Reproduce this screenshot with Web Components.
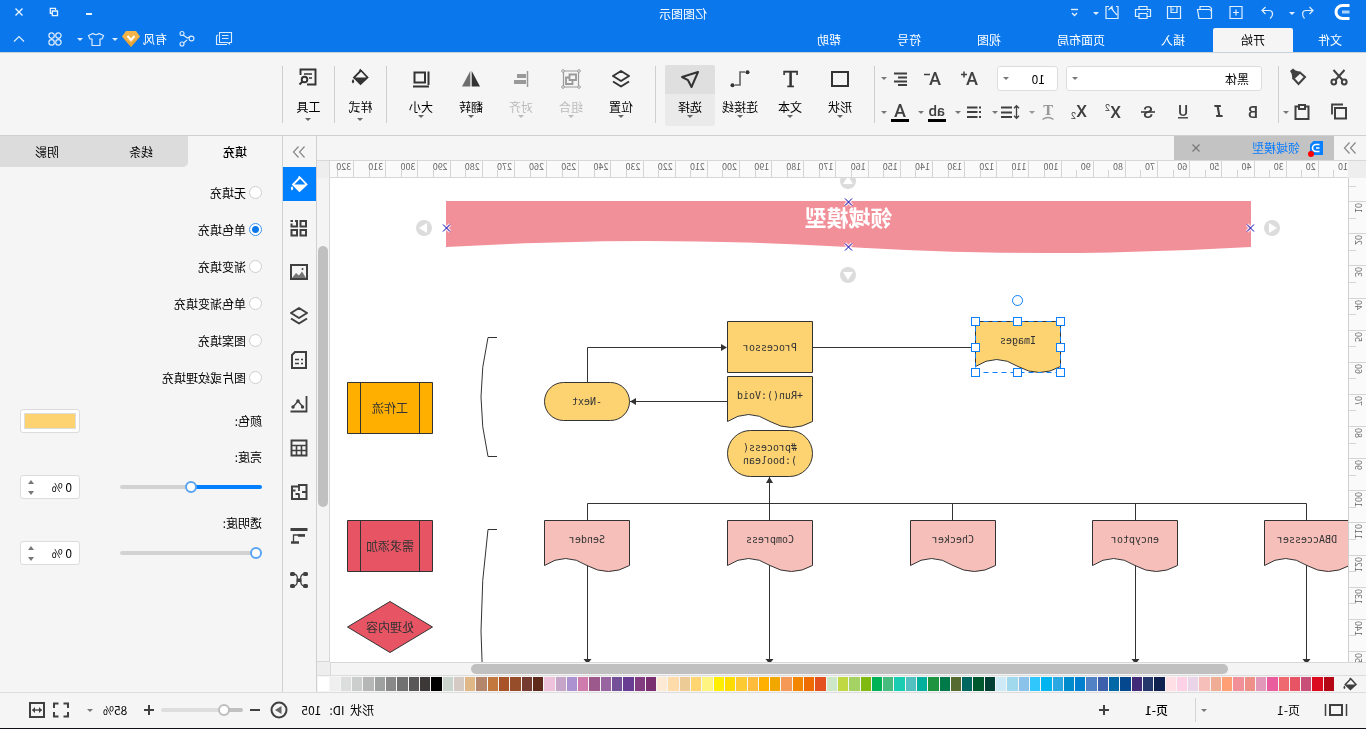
<!DOCTYPE html>
<html lang="zh-CN">
<head>
<meta charset="utf-8">
<title>亿图图示</title>
<style>
  html, body { margin: 0; height: 100%; background: #f4f4f4; overflow: hidden; }
  body { font: 12px/16px "Noto Sans CJK SC", "Liberation Sans", sans-serif; color: #000; }
</style>
</head>
<body>
<edraw-app></edraw-app>
<script>
const define = (name, render) => customElements.define(name, class extends HTMLElement {
  constructor() { super(); this.attachShadow({ mode: 'open' }); }
  connectedCallback() { this.shadowRoot.innerHTML = render(this); }
});
const RESET = `*,:host{box-sizing:border-box} button{font:inherit;color:inherit;background:none;border:0;padding:0;margin:0}
 input,select{font:inherit;color:inherit;margin:0} a{color:inherit;text-decoration:none}`;

/* ---------- icons: 24 x 24 drawings ---------- */
const S = (w, d, extra = '') => `<path d="${d}" fill="none" stroke="currentColor" stroke-width="${w}" ${extra}/>`;
const T = (x, y, size, t, family = 'Roboto', more = '') => `<text x="${x}" y="${y}" font-size="${size}" font-family="${family}, sans-serif" fill="currentColor" ${more}>${t}</text>`;
const BUCKET = (w) => S(w, 'M11 4.5 L12.5 6 M11 5.5 L4.5 12.5 L11.5 19 L18 12.5 L11.5 6') +
  `<path d="M4.5 12.5 H18 L11.5 19 Z" fill="currentColor"/><path d="M19 14 q2.4 3 0 4.4 q-2.4 -1.4 0 -4.4" fill="currentColor"/>`;
const ICONS = {
  logo: S(3, 'M4.5 5.5 H11.5 A6.5 6.5 0 0 1 11.5 18.5 H4.5') + `<path d="M4.5 12 H12" stroke="#a9d2fa" stroke-width="3"/>`,
  undo: S(1.2, 'M10.5 7 L7 10.5 L10.5 14 M7 10.5 H14 C18 10.5 18.5 15 15.5 18.5'),
  redo: S(1.2, 'M13.5 7 L17 10.5 L13.5 14 M17 10.5 H10 C6 10.5 5 15 9 18.5'),
  newbox: S(1.2, 'M6 6.5 H18 V18.5 H6 Z M12 9.5 V15.5 M9 12.5 H15'),
  open: S(1.2, 'M5.5 18.5 V8.5 L7.5 6.5 H17 V9 M5.5 18.5 H18 L19.5 9.5 H8 Q6.5 9.5 6 11'),
  save: S(1.2, 'M5.5 6.5 H18.5 V18.5 H5.5 Z M9 6.5 V12.5 H15 V6.5 M13 8.5 V10.5'),
  print: S(1.2, 'M8 9.5 V6.5 H16 V9.5 M8 16.5 H4.5 V9.5 H19.5 V16.5 H16 M8 13.5 H16 V18.5 H8 Z M6.5 11.5 H8'),
  share: S(1.2, 'M9 6.5 H6 V18.5 H18 V6.5 H16 M8.5 10 L12 6.5 L12.5 10.5 M12 6.5 Q11 9 17 15', 'transform="matrix(-1 0 0 1 24 0)"'),
  more: S(1.4, 'M8 9.5 H15') + S(1.3, 'M9 13 L11.5 15.5 L14 13'),
  min: S(2, 'M9 14 H15'),
  restore: S(1.3, 'M10.5 10 V8.3 H15.7 V13.3 H14') + S(1.3, 'M8.5 11 H13.7 V15.7 H8.5 Z'),
  close: S(1.4, 'M8.5 8.5 L15.5 15.5 M15.5 8.5 L8.5 15.5'),
  comment: S(1.1, 'M4.5 6.5 H16.5 V16.5 H8.5 L6.5 18 V16.5 H4.5 Z M7.5 9.5 H14 M7.5 12.5 H14 M18 9 L19.5 10 V18.5 H9', 'transform="matrix(1 0 0 1 0 -1)"'),
  nodes: S(1.1, 'M8 9 L11.5 11 L16 8 M12 13 L15.5 16') + `<g fill="none" stroke="currentColor" stroke-width="1.1"><circle cx="7.5" cy="11.5" r="2.4"/><circle cx="17" cy="6.500" r="2"/><circle cx="17" cy="17" r="2"/></g>`,
  vip: `<path d="M7 4 H17 L21 9.5 L12 20 L3 9.5 Z" fill="#f5b448"/><path d="M3 9.5 L12 20 L21 9.5 L12 16Z" fill="#dd9a2e" opacity=".6"/><path d="M8.5 9 L12 13 L15.5 9" fill="none" stroke="#fff" stroke-width="2"/>`,
  shirt: S(1.2, 'M9 6.5 Q12 9 15 6.5 L19.5 8.5 L18 12 H16 V18.5 H8 V12 H6 L4.5 8.5 Z'),
  apps: `<g fill="none" stroke="currentColor" stroke-width="1.2"><circle cx="8.6" cy="8.6" r="2.7"/><circle cx="15.4" cy="8.6" r="2.7"/><circle cx="8.6" cy="15.4" r="2.7"/><circle cx="15.4" cy="15.4" r="2.7"/></g>`,
  up: S(1.2, 'M7 14.5 L12 9.5 L17 14.5'),
  cut: S(2, 'M6.5 5 L15.5 15 M17.5 5 L8.5 15') + `<g fill="none" stroke="currentColor" stroke-width="2"><circle cx="6.8" cy="17" r="2.4"/><circle cx="17.2" cy="17" r="2.4"/></g>`,
  brush: S(2, 'M5 12 L10 7.5 L16.5 13.5 L11.5 19 Z') + `<path d="M9 7 L14.5 5.5 L17 3.5 L20 6 L18.3 9 L17.5 14.5 Z" fill="currentColor"/>`,
  copy: S(2, 'M8 9 H19 V19.5 H8 Z', 'transform="translate(-3,0)"') + S(1.8, 'M8 5.5 H19 V15.5'),
  paste: S(2, 'M8 6.5 H5.5 V19 H18.5 V6.5 H16') + S(2, 'M9 5 H15 V9 H9 Z'),
  fontup: T(4, 18, 18, 'A', 'Roboto', 'font-weight="500"') + S(1.5, 'M15 7.5 H21 M18 4.5 V10.5'),
  fontdown: T(4, 18, 18, 'A', 'Roboto', 'font-weight="500"') + S(1.5, 'M15 7.5 H21'),
  align: S(2, 'M5 6.5 H18 M5 10.5 H14 M5 14.5 H18 M5 18 H14'),
  bold: T(7, 18, 16, 'B', 'Roboto', 'font-weight="500"'),
  italic: T(7, 17, 15, 'I', 'DejaVu Sans Mono', 'font-weight="bold" font-style="italic"'),
  underline: T(7, 16, 15, 'U', 'Roboto', 'font-weight="500"') + S(1.4, 'M7 17.8 H17'),
  strike: T(7, 18, 16, 'S', 'Roboto', 'font-weight="500"') + S(1.6, 'M5 12 H19'),
  sup: T(4, 18, 17, 'X', 'Roboto', 'font-weight="500"') + T(15, 11, 9, '2', 'Roboto'),
  sub: T(3, 17, 17, 'X', 'Roboto', 'font-weight="500"') + T(14, 19, 9, '2', 'Roboto'),
  curve: T(7, 15, 13, 'T', 'DejaVu Serif', 'font-weight="bold"') + S(1.5, 'M6.5 19.5 Q12 15.5 17.5 19.5'),
  spacing: S(1.3, 'M6.5 6 V18 M4 8.2 L6.5 5.7 L9 8.2 M4 15.8 L6.5 18.3 L9 15.8') + S(2, 'M11 7.5 H22 M11 12.5 H22 M11 17 H22'),
  list: S(2, 'M5 7.5 H7 M5 12 H7 M5 17 H7 M8.5 7.5 H19 M8.5 12 H19 M8.5 17 H19'),
  highlight: T(4, 16, 15, 'ab', 'Roboto', 'font-weight="500"') + `<path d="M3 19 H21 V22 H3 Z" fill="#000"/>`,
  color: T(6, 17, 18, 'A', 'Roboto', 'font-weight="500"') + `<path d="M3 19 H21 V22 H3 Z" fill="#000"/>`,
  rect: S(2, 'M4 5 H20 V19 H4 Z'),
  text: T(4, 20, 22, 'T', 'DejaVu Serif', 'stroke="currentColor" stroke-width=".4"'),
  connector: S(1.6, 'M7 5 H12 V18 H17', 'opacity=".75"') + `<g fill="currentColor"><circle cx="4.5" cy="5.2" r="2"/><circle cx="19.5" cy="18.2" r="2"/></g>`,
  select: S(2, 'M4 5 L20 10 L14 13.2 L10.5 20 Z', 'stroke-linejoin="round"'),
  layers: S(2, 'M12 4 L20 9 L12 14 L4 9 Z M4 14.5 L12 19.5 L20 14.5', 'stroke-linejoin="round"'),
  group: S(1.2, 'M4.5 4 H19.5 V20 H4.5 Z') + `<g fill="#fff" stroke="currentColor"><circle cx="4" cy="4" r="1.3"/><circle cx="20" cy="4" r="1.3"/><circle cx="4" cy="20" r="1.3"/><circle cx="20" cy="20" r="1.3"/></g>` + S(1.8, 'M7 7.5 H13.5 V13 H7 Z M14 10.5 H17 V17 H10.5 V14'),
  alignobj: S(1.5, 'M5.5 4 V20') + `<path d="M7 7 h9 v4 h-9z M7 13 h12 v4 h-12z" fill="currentColor"/>`,
  flip: `<path d="M11.3 4 V19.5 H3 Z" fill="currentColor"/><path d="M12.7 4 V19.5 H21 Z" fill="currentColor" opacity=".7"/>`,
  size: S(2, 'M8 5.5 H18.5 V15.5 H8 Z M4.5 4.5 V18 M4 19.5 H20'),
  bucket: BUCKET(1.8),
  tool: S(1.9, 'M13 19.5 H4.5 V4.5 H19.5 V10') + S(1.6, 'M8 9 H16 M8 13 H11') + `<circle cx="15.5" cy="14.5" r="2.8" fill="none" stroke="currentColor" stroke-width="1.9"/>` + S(2, 'M17.5 16.5 L20.5 19.5'),
  dbl: S(1.2, 'M6.5 6.5 L11.5 12 L6.5 17.5 M12.5 6.5 L17.5 12 L12.5 17.5'),
  grid: S(2, 'M5 5 H10.5 V10.5 H5 Z M5 14 H10.5 V19.5 H5 Z M14 14 H19.5 V19.5 H14 Z M16 5 H14 V10.5 H19.5 V7.5 M18 5 H20.5'),
  image: S(2, 'M4 5 H20 V19 H4 Z') + `<path d="M5 18 L9 13 L12 15.5 L15 11.5 L19 18 Z" fill="currentColor" opacity=".7" transform="matrix(-1 0 0 1 24 0)"/><circle cx="8.5" cy="9" r="1" fill="currentColor"/>`,
  page: S(2, 'M5 4 H16 L19 7 V20 H5 Z') + S(1.6, 'M8 11.5 H10 M12 11.5 H16 M8 15.5 H10 M12 15.5 H16'),
  chart: S(1.8, 'M4.5 4 V19.5 H20.5') + S(1.4, 'M8 15 L13 9 L18 15') + `<g fill="currentColor"><circle cx="8.5" cy="15" r="1.7"/><circle cx="13" cy="9" r="1.8"/><circle cx="18" cy="15" r="1.7"/></g>`,
  table: S(1.9, 'M4.5 4.5 H19.5 V19.5 H4.5 Z') + S(1.6, 'M4.5 9.5 H19.5 M4.5 14.5 H19.5 M9.5 9.5 V19.5 M14.5 9.5 V19.5'),
  plan: S(2, 'M4.5 5 H12 V6.5 H19 V19 H4.5 Z') + S(1.8, 'M4.5 12 H9 M12 6 V11 M12 13.5 V19 M12 14 H15.5 M15.5 10.5 H19'),
  timeline: S(3, 'M3.5 5.5 H20.5') + S(2.5, 'M6 11.5 H13 M12 18.5 H20') + S(1.3, 'M6 11 H17.5 V18'),
  mind: `<g fill="currentColor"><rect x="3" y="4" width="5" height="4" rx="1.5"/><rect x="16" y="4" width="5" height="4" rx="1.5"/><rect x="3" y="16" width="5" height="4" rx="1.5"/><rect x="16" y="16" width="5" height="4" rx="1.5"/><rect x="9.5" y="10.5" width="5" height="3.5"/></g>` + S(1.3, 'M7.500 6 C12 7 11 17 7.500 18 M16.500 6 C12 7 13 17 16.500 18'),
  pages: S(1.5, 'M1.500 6 V18 M22.500 6 V18') + S(2, 'M6 7 H18 V17 H6 Z'),
  plus: S(2, 'M12 7 V17 M7 12 H17'),
  minus: S(2, 'M7 12 H17'),
  play: `<circle cx="12" cy="12" r="7.5" fill="none" stroke="currentColor" stroke-width="2"/><path d="M9.5 8 L16 12 L9.5 16 Z" fill="#666"/>`,
  full: S(2, 'M5 10 V5.5 H9.5 M14.5 5.5 H19 V10 M19 14 V18.5 H14.5 M9.5 18.5 H5 V14'),
  fit: S(2, 'M5 5 H19 V19 H5 Z') + S(1.4, 'M7.5 12 H16.5') + `<path d="M7 12 l3 -3 v6z M17 12 l-3 -3 v6z" fill="currentColor"/>`,
  file: `<path d="M5 5 H14.5 L18 8.5 V19 H5 Z" fill="#0a80ff"/><path d="M8.5 8.5 H12 A3.5 3.5 0 0 1 12 15.5 H8.5 M8.5 12 H12" fill="none" stroke="#fff" stroke-width="1.6"/><circle cx="17" cy="18" r="3" fill="#f00"/>`,
  tabclose: S(1.2, 'M8.5 8.5 L15.5 15.5 M15.5 8.5 L8.5 15.5')
};
define('app-icon', el => `<style>:host{display:inline-flex;width:24px;height:24px;flex:none} svg{display:block;overflow:visible}</style>
  <svg width="24" height="24" viewBox="0 0 24 24" aria-hidden="true">${ICONS[el.getAttribute('name')] || ''}</svg>`);
define('drop-caret', () => `<style>:host{display:inline-flex;width:8px;justify-content:center;flex:none}
  i{border:3px solid transparent;border-top-color:currentColor;border-bottom:0}</style><i></i>`);

/* ---------- title bar ---------- */
define('title-bar', () => `<style>${RESET}
  :host{display:block;background:#0a78ec;color:#fff;height:53px;border-bottom:1px solid #c8d0d8}
  .row{display:grid;grid-template-columns:1fr auto 1fr;height:26px;align-items:center}
  .quick,.win,.tools,nav{display:flex;align-items:center}
  .quick{padding-left:12px;gap:7px;color:#e0effe}
  .quick drop-caret{margin-left:-7px;margin-right:-1px}
  .quick .u{margin-left:3px}
  .win{justify-content:flex-end;gap:11px;padding-right:7px;color:#eaf4ff}
  .row2{display:flex;height:26px;align-items:flex-end}
  nav a{display:block;height:24px;line-height:24px;padding:0 28px}
  nav a:first-child{padding:0 25px 0 24px}
  nav a.on{background:#f5f5f5;color:#000;border-radius:2px 2px 0 0}
  .tools{margin-left:auto;height:26px;padding-right:7px;color:#dcecfd}
  .tools span{color:#fff;margin-left:8px}
  .tools button{height:24px}
  .g13{margin-left:13px}.g3{margin-left:3px}.g9{margin-left:9px}.g12{margin-left:12px}
</style>
<div class="row"><div class="quick">
  <button aria-label="logo" style="color:#fff"><app-icon name="logo"></app-icon></button>
  <button class="u" aria-label="撤销"><app-icon name="undo"></app-icon></button><drop-caret></drop-caret>
  <button class="u" aria-label="重做"><app-icon name="redo"></app-icon></button>
  ${['newbox','open','save','print','share'].map(n => `<button aria-label="${n}"><app-icon name="${n}"></app-icon></button>`).join('')}
  <drop-caret></drop-caret><button aria-label="more"><app-icon name="more"></app-icon></button>
</div><span>亿图图示</span>
<div class="win">${['min','restore','close'].map(n => `<button aria-label="${n}"><app-icon name="${n}"></app-icon></button>`).join('')}</div></div>
<div class="row2"><nav>${['文件','开始','插入','页面布局','视图','符号','帮助'].map((t, i) => `<a href="#" class="${i === 1 ? 'on' : ''}">${t}</a>`).join('')}</nav>
<div class="tools"><button aria-label="comment"><app-icon name="comment"></app-icon></button>
<button class="g13" aria-label="share"><app-icon name="nodes"></app-icon></button><span>有风</span>
<app-icon name="vip"></app-icon><drop-caret></drop-caret><button class="g3" aria-label="skin"><app-icon name="shirt"></app-icon></button><drop-caret></drop-caret>
<button class="g9" aria-label="apps"><app-icon name="apps"></app-icon></button><button class="g12" aria-label="collapse"><app-icon name="up"></app-icon></button></div></div>`);

/* ---------- ribbon ---------- */
define('ribbon-button', el => `<style>${RESET}
  :host{display:block;width:50px;height:58px;color:#333;flex:none}
  :host([plain]){width:51px}
  button{display:flex;flex-direction:column;align-items:center;width:100%;height:61px;padding-top:2px;margin-top:-1px;border-radius:2px}
  :host([active]) button{background:linear-gradient(#dfdfdf 0 29px,#eaeaea 29px)}
  :host([disabled]) {color:#999}
  :host([disabled]) span{color:#bbb}
  span{line-height:16px;margin-top:8px;color:#000;white-space:nowrap}
  :host([plain]) span{margin-top:12px}
  :host([plain]) app-icon{height:22px;margin-top:-2px}
  :host([plain]) drop-caret{margin-top:3px}
  drop-caret{color:#666;margin-top:0}
  :host([disabled]) drop-caret{color:#bbb}
</style><button><app-icon name="${el.getAttribute('icon')}"></app-icon><span><slot></slot></span><drop-caret></drop-caret></button>`);
define('ribbon-bar', () => {
  const b = (n, c = '') => `<button aria-label="${n}" class="${c}"><app-icon name="${n}"></app-icon></button>`;
  const d = (n, c = '') => `<button aria-label="${n}" class="drop ${c}"><app-icon name="${n}"></app-icon><drop-caret></drop-caret></button>`;
  return `<style>${RESET}
  :host{display:flex;background:#f5f5f5;border-bottom:1px solid #d0d0d0;padding:13px 0 11px;color:#404040}
  .sep{width:1px;height:57px;background:#cfcfcf;flex:none}
  .clip{display:grid;grid-template-rows:25px 24px;row-gap:9px;width:87px;padding-left:15px;flex:none}
  .clip div,.line{display:flex;align-items:center}
  .font{display:grid;grid-template-rows:25px 24px;row-gap:9px;width:403px;padding-left:7px;flex:none}
  .line button{height:24px}
  .drop{display:flex;align-items:center;height:24px}
  .drop drop-caret,.pick drop-caret{color:#777}
  .dim,.dim drop-caret{color:#999}
  .pick{position:relative;height:25px;display:block}
  .pick select{appearance:none;width:100%;height:25px;border:1px solid #ddd;border-radius:3px;background:#fff;padding:0 12px;color:#000;line-height:16px}
  .pick drop-caret{position:absolute;right:5px;top:11px}
  .face{width:196px;margin-left:9px}.num{width:61px;margin-left:8px}
  .w35{width:35px}.g15{margin-left:15px}.g13{margin-left:13px}.g17{margin-left:17px}.g9{margin-left:9px}.g5{margin-left:5px}.g1{margin-left:1px}
  .tools{display:flex;padding:0 9px;flex:none}
  </style>
  <div class="clip"><div>${b('cut')}${b('brush','g17')}</div><div>${b('copy')}${d('paste','g13')}</div></div><i class="sep"></i>
  <div class="font"><div class="line">
    <label class="pick face"><select aria-label="字体"><option>黑体</option></select><drop-caret></drop-caret></label>
    <label class="pick num"><select aria-label="字号"><option>10</option></select><drop-caret></drop-caret></label>
    ${b('fontup','g15')}${b('fontdown','g13')}${d('align','g9')}</div>
    <div class="line">${['bold','italic','underline','strike','sup','sub'].map(n => b(n, 'w35')).join('')}${d('curve','g1 dim')}${d('spacing','g5')}${d('list','g5')}${d('highlight','g5')}${d('color','g5')}</div></div>
  <i class="sep"></i>
  <div class="tools"><ribbon-button icon="rect">形状</ribbon-button><ribbon-button icon="text">文本</ribbon-button><ribbon-button icon="connector">连接线</ribbon-button><ribbon-button icon="select" active>选择</ribbon-button></div><i class="sep"></i>
  <div class="tools"><ribbon-button icon="layers">位置</ribbon-button><ribbon-button icon="group" disabled>组合</ribbon-button><ribbon-button icon="alignobj" disabled>对齐</ribbon-button><ribbon-button icon="flip">翻转</ribbon-button><ribbon-button icon="size">大小</ribbon-button></div><i class="sep"></i>
  <ribbon-button plain icon="bucket">样式</ribbon-button><i class="sep"></i><ribbon-button plain icon="tool">工具</ribbon-button><i class="sep"></i>`;
});

/* ---------- rulers ---------- */
define('ruler-strip', el => {
  const vertical = el.hasAttribute('vertical');
  const from = +el.getAttribute('from'), count = +el.getAttribute('count');
  const cells = Array.from({ length: count }, (_, i) => `<div><span>${from + i ? (from + i) * 10 : ''}</span></div>`).join('');
  return `<style>*,:host{box-sizing:border-box}
  :host{display:flex;overflow:hidden;background:#fafafa;color:#666;font-size:9px;line-height:10px}
  .strip{display:flex;flex:1}
  .strip div{flex:1 1 0;position:relative;min-width:0;min-height:0}
  .strip div::after{content:"";position:absolute;background:#d4d4d4}
  ${vertical ? `:host{border-right:1px solid #d0d0d0}
    .strip{flex-direction:column;margin:-9px 0 -21px}
    .strip div{border-top:1px solid #d4d4d4;display:flex;padding:1px 0 0 3px;align-items:flex-start}
    .strip div::after{right:0;width:7px;height:1px;top:50%}
    span{writing-mode:vertical-rl;rotate:180deg;width:10px}` :
    `:host{border-bottom:1px solid #d8d8d8}
    .strip{margin:0 -8px 0 -3px}
    .strip div{border-left:1px solid #d4d4d4;padding:1px 0 0 2px}
    .strip div::after{left:50%;bottom:0;width:1px;height:7px}`}
  </style><div class="strip">${cells}</div>`;
});

/* ---------- diagram nodes ---------- */
define('flow-node', el => {
  const a = n => el.getAttribute(n), w = +a('w') || 86, h = +a('h') || 52, fill = a('fill');
  const W = w - 1, H = h - 1;
  const shapes = {
    box: `<path d="M0 0 H${W} V${H} H0 Z"/>`,
    doc: `<path d="M0 0 H${W} V45 Q64 31 ${W / 2} 45 Q21 57 0 45 Z"/>`,
    pill: `<rect width="${W}" height="${H}" rx="${H / 2}"/>`,
    sub: `<path d="M0 0 H${W} V${H} H0 Z M13 0 V${H} M${W - 13} 0 V${H}"/>`,
    diamond: `<path d="M0 ${H / 2} L${W / 2} 0 L${W} ${H / 2} L${W / 2} ${H} Z"/>`
  };
  return `<style>:host{position:absolute;display:grid;place-items:center;left:${a('x')}px;top:${a('y')}px;width:${w}px;height:${h}px;
    font:${a('cjk') !== null ? '12px/14px "Noto Sans CJK SC"' : '10px/13px "DejaVu Sans Mono"'},monospace;color:#333;text-align:center;white-space:pre}
  svg{position:absolute;inset:0;overflow:visible} span{position:relative;${a('kind') === 'doc' ? 'margin-bottom:13px' : ''}}</style>
  <svg width="${w}" height="${h}"><g transform="translate(.5,.5)" fill="${fill}" stroke="#333">${shapes[a('kind')]}</g></svg><span><slot></slot></span>`;
});
define('diagram-canvas', () => {
  const Y = '#fdd372', P = '#f6bfba', O = '#ffaf00', R = '#e75464';
  const cross = (x, y) => `<g transform="translate(${x} ${y})"><path d="M-3.5 -3.5 L3.5 3.5 M-3.5 3.5 L3.5 -3.5" stroke="#fff" stroke-opacity=".7" stroke-width="3.5"/><path d="M-3.5 -3.5 L3.5 3.5 M-3.5 3.5 L3.5 -3.5" stroke="#0000b8"/></g>`;
  const hint = (x, y, r) => `<g transform="translate(${x} ${y}) rotate(${r})"><circle r="8" fill="#dcdcdc"/><path d="M0 -5 L5 3 H-5 Z" fill="#fff"/></g>`;
  const handle = (x, y) => `<rect x="${x - 4}" y="${y - 4}" width="8" height="8" fill="#fff" stroke="#0a80ff"/>`;
  const docs = [[718, 'Sender'], [535, 'Compress'], [352, 'Checker'], [170, 'encyptor'], [-2, 'DBAccesser']];
  return `<style>:host{display:block;position:relative;overflow:hidden;background:#fff;min-width:0;min-height:0}
   svg{position:absolute;left:0;top:0;overflow:visible} h1{position:absolute;left:97px;top:24px;width:805px;margin:0;text-align:center;color:#fff;font:bold 22px/28px "Noto Sans CJK SC",sans-serif}
  </style>
  <svg width="1018" height="484" fill="none" stroke="#333">
    <path d="M97 23 H902 V69 Q701 57 500 69 T97 69 Z" fill="#f2909a" stroke="none"/>
    <path d="M373 169.5 H535 M760.5 204 V169.5 H622 M621 223.5 H718 M41.5 342 V325.5 H760.5 V342 M212.5 325 V342 M395.5 325 V342 M578.5 342 V299 M41.5 387 V484 M212.5 387 V484 M578.5 387 V484 M760.5 387 V484"/>
    <path d="M851 159.5 H860 Q874 219 860 278.5 H851 M851 351.5 H860 Q874 453 860 555"/>
    <g fill="#333" stroke="none"><path d="M621 169.5 l6 -3.5 v7z M718 223.5 l-6 -3.5 v7z M578.5 299 l-3.5 6 h7z M41.5 486 l-4 -5 h8z M212.5 486 l-4 -5 h8z M578.5 486 l-4 -5 h8z M760.5 486 l-4 -5 h8z"/></g>
  </svg>
  <h1>领域模型</h1>
  <flow-node kind="box" x="535" y="143" fill="${Y}">Processor</flow-node>
  <flow-node kind="doc" x="535" y="198" fill="${Y}">+Run():Void</flow-node>
  <flow-node kind="pill" x="535" y="252" h="47" fill="${Y}">#process(<br>):boolean</flow-node>
  <flow-node kind="pill" x="718" y="204" h="39" fill="${Y}">-Next</flow-node>
  <flow-node kind="doc" x="287" y="143" fill="${Y}">Images</flow-node>
  ${docs.map(([x, t]) => `<flow-node kind="doc" x="${x}" y="342" fill="${P}">${t}</flow-node>`).join('')}
  <flow-node kind="sub" cjk x="915" y="204" fill="${O}">工作流</flow-node>
  <flow-node kind="sub" cjk x="915" y="342" fill="${R}">需求添加</flow-node>
  <flow-node kind="diamond" cjk x="915" y="423" fill="${R}">处理内容</flow-node>
  <svg width="1018" height="484" fill="none">
    ${cross(499.5, 24)}${cross(499.5, 69)}${cross(97.5, 50)}${cross(901.5, 50)}
    ${hint(500, 3, 0)}${hint(500, 97, 180)}${hint(76, 50, -90)}${hint(924, 50, 90)}
    <path d="M287.5 143.5 H372.5 V194.5 H287.5 Z" stroke="#0a80ff" stroke-dasharray="5 4"/>
    ${[287.5, 330.5, 372.5].map(x => [143.5, 169.5, 194.5].map(y => x === 330.5 && y === 169.5 ? '' : handle(x, y)).join('')).join('')}
    <circle cx="330.5" cy="122.5" r="5" fill="#fff" stroke="#0a80ff"/>
  </svg>`;
});

/* ---------- work area: document tabs, rulers, canvas, scroll bars, palette ---------- */
const PALETTE = ('b50616 db0a1e c74f78 e75464 ee6a70 e95c9e e298b8 ee8f88 f2909a ff9f76 f0ad96 f6bfba ead4e8 fdd2e6 fedfe5 ' +
 '0f214e 24386c 402c78 06488e 0068a6 3d60ac 5282c6 0080cf 008ccc 2ba8e2 00b4f0 30c8fc 8bc2ea a0d8ee cdeaf6 ' +
 '004034 00592e 006660 566b30 007a48 1f9440 00b09c 52bfc0 1acdb2 48bc7e 00b256 80ba10 a4d264 c0d942 cde8c8 ' +
 'e3511e ee6c00 f38600 f59a56 f2a600 ffb000 ffbb3c fccb34 ffdc00 ffee00 fdf482 ffd572 eccb96 ffdcaa fdead4 ' +
 '7a3070 823c80 693e92 745098 9865a0 9c5a8c d07bae ac92d0 c7a5c8 edc2da 5e2a1c 763b30 954d2a a85428 c3783e b4866c e0b888 d5cac4 cad3cc ' +
 '000000 3d3838 595757 717171 898989 9fa0a0 b5b6b6 cccdcd dcdddd efefef ffffff').split(' ');
define('color-palette', () => `<style>:host{display:flex;align-items:center;height:17px;background:#f5f5f5;color:#404040;border-top:1px solid #ddd;box-sizing:border-box}
  .s{display:flex;gap:1px;flex:1;height:14px;margin-right:1px} .s i{flex:1 1 0} app-icon{margin:0 4px;height:16px;align-items:center;scale:.8}</style>
  <app-icon name="bucket"></app-icon><div class="s">${PALETTE.map(c => `<i style="background:#${c}"></i>`).join('')}</div>`);
define('work-area', () => `<style>${RESET}
  :host{display:grid;grid-template:24px 18px minmax(0,1fr) 13px 17px / 18px minmax(0,1fr) 13px;min-width:0;min-height:0;background:#f5f5f5}
  .tabs{grid-column:1/-1;display:flex;background:#f5f5f5}
  .tabs>button{width:32px;height:24px;display:flex;justify-content:center;color:#888}
  .doc{display:flex;align-items:center;width:160px;background:#c3c3c3;color:#0a7cff;padding-left:6px}
  .doc a{margin-left:4px;flex:1}.doc button{width:24px;height:24px;margin-right:10px;color:#777}
  .tl{background:#eee;border-top:1px solid #d8d8d8}
  .h{border-top:1px solid #d8d8d8}
  .tr{background:#eee;border-top:1px solid #d8d8d8;border-left:1px solid #d8d8d8}
  .v{grid-column:1;grid-row:3}
  .canvas{grid-column:2;grid-row:3}
  .vs{grid-column:3;grid-row:3;border-left:1px solid #d8d8d8;border-bottom:1px solid #d8d8d8;background:#f4f4f4;padding:68px 1px 0;display:grid;grid-template-rows:261fr 154fr}
  .vs i,.hs i{background:#c0c0c0;border-radius:5px}
  .hs{grid-column:1/3;grid-row:4;border-top:1px solid #d8d8d8;border-right:1px solid #d8d8d8;background:#f4f4f4;padding:1px 0;display:grid;grid-template-columns:138fr 758fr 140fr}
  .hs i{grid-column:2;height:10px}
  .br{grid-column:3;grid-row:4;background:#eee}
  color-palette{grid-column:1/-1}
</style>
<div class="tabs"><button aria-label="展开"><app-icon name="dbl"></app-icon></button>
<div class="doc"><app-icon name="file"></app-icon><a href="#">领域模型</a><button aria-label="关闭"><app-icon name="tabclose"></app-icon></button></div></div>
<div class="tl"></div><ruler-strip class="h" from="1" count="32"></ruler-strip><div class="tr"></div>
<ruler-strip class="v" vertical from="0" count="16"></ruler-strip><diagram-canvas class="canvas"></diagram-canvas><div class="vs"><i></i></div>
<div class="hs"><i></i></div><div class="br"></div><color-palette></color-palette>`);

/* ---------- side rail and property panel ---------- */
define('side-rail', () => `<style>${RESET}
  :host{display:flex;flex-direction:column;width:35px;border:solid #d0d0d0;border-width:0 1px;color:#404040;background:#f5f5f5}
  button{height:34px;margin-bottom:10px;display:flex;align-items:center;justify-content:center}
  .fold{height:31px;margin:0;color:#888}.on{background:#0080ff;color:#fff}
</style><button class="fold" aria-label="收起"><app-icon name="dbl"></app-icon></button>
${['bucket','grid','image','layers','page','chart','table','plan','timeline','mind'].map((n, i) => `<button class="${i ? '' : 'on'}" aria-label="${n}"><app-icon name="${n}"></app-icon></button>`).join('')}`);
define('percent-box', el => `<style>${RESET}
  :host{display:flex;width:60px;height:24px;border:1px solid #dcdcdc;border-radius:3px;background:#fff}
  input{border:0;background:none;width:36px;padding:0 0 0 7px;outline:0;color:#000}
  div{display:flex;flex-direction:column;width:20px;margin-left:2px;padding:3px 0;justify-content:space-between;align-items:center}
  button{width:6px;height:5px;display:block}
  i{display:block;border:3px solid transparent}
  .u i{border-top:0;border-bottom:4px solid #777}.d i{border-bottom:0;border-top:4px solid #777}
</style><input type="text" value="0 %" aria-label="${el.getAttribute('label')}"><div><button class="u" aria-label="增加"><i></i></button><button class="d" aria-label="减少"><i></i></button></div>`);
define('slider-bar', el => { const v = el.getAttribute('value'); return `<style>
  :host{display:block} input{appearance:none;display:block;width:100%;height:12px;margin:0;background:none;--f:${v}%}
  input::-webkit-slider-runnable-track{height:4px;border-radius:2px;background:linear-gradient(90deg,var(--fill,#0080ff) var(--f),var(--rest,#d2d2d2) var(--f))}
  input::-webkit-slider-thumb{appearance:none;box-sizing:border-box;width:12px;height:12px;margin-top:-4px;border-radius:50%;background:#fff;border:2px solid var(--ring,#5aa4f2)}
</style><input type="range" value="${v}" aria-label="${el.getAttribute('label')}">`; });
define('property-panel', () => `<style>${RESET}
  :host{display:block;width:282px;background:#f5f5f5}
  .tabs{display:grid;grid-template-columns:repeat(3,1fr);height:31px}
  .tabs button{height:31px;line-height:31px;background:#dcdcdc}
  .tabs .on{background:#f5f5f5;font-weight:500}
  .tabs .on + button{border-bottom-left-radius:5px}
  .body{padding:15px 20px}
  .opt{display:flex;align-items:center;gap:3px;height:21px;margin-bottom:16px}
  .opt input{appearance:none;width:13px;height:13px;border:1px solid #cfcfcf;border-radius:50%;background:#fff}
  .opt input:checked{border-color:#3d94f5;background:radial-gradient(#0a78ec 0 3px,#fff 4px)}
  .row{display:flex;align-items:center;justify-content:space-between;height:24px}
  .color{margin-top:21px}
  .name{display:block;height:16px;margin:16px 0 10px}
  input[type=color]{appearance:none;width:60px;height:24px;border:1px solid #dcdcdc;border-radius:3px;background:#fff;padding:3px}
  input[type=color]::-webkit-color-swatch-wrapper{padding:0}
  input[type=color]::-webkit-color-swatch{border:1px solid #ddd;border-radius:0}
  slider-bar{width:142px}
</style>
<div class="tabs"><button class="on">填充</button><button>线条</button><button>阴影</button></div>
<div class="body">
${['无填充','单色填充','渐变填充','单色渐变填充','图案填充','图片或纹理填充'].map((t, i) => `<label class="opt"><input type="radio" name="fill" ${i === 1 ? 'checked' : ''}>${t}</label>`).join('')}
<div class="row color"><label for="c">颜色:</label><input id="c" type="color" value="#fdd372"></div>
<span class="name">亮度:</span><div class="row"><slider-bar value="50" label="亮度"></slider-bar><percent-box label="亮度"></percent-box></div>
<span class="name">透明度:</span><div class="row"><slider-bar value="0" label="透明度"></slider-bar><percent-box label="透明度"></percent-box></div>
</div>`);

/* ---------- status bar ---------- */
define('status-bar', () => `<style>${RESET}
  :host{display:flex;align-items:center;height:37px;padding-bottom:1px;border-top:1px solid #ddd;border-bottom:1px solid #101018;background:#f5f5f5;color:#404040}
  a,span{color:#000;white-space:nowrap} button{height:24px}
  drop-caret{color:#777}
  .p1{margin-left:24px}.c1{margin-left:auto}.left{display:flex;align-items:center;width:170px;padding:0 4px 0 18px}
  .sep{width:1px;height:24px;background:#d4d4d4}
  .p2{margin-left:27px;font-weight:500}.add{margin-left:29px}
  .right{display:flex;align-items:center;margin-left:auto;padding-right:25px}
  slider-bar{width:82px;--fill:#c0c0c0;--rest:#dedede;--ring:#bdbdbd}
  .id{margin-right:10px}.pct{margin-left:10px}.c2{margin-left:9px}.f{margin-left:13px}
</style>
<div class="left"><button aria-label="页面"><app-icon name="pages"></app-icon></button><a class="p1" href="#">页-1</a><drop-caret class="c1"></drop-caret></div><i class="sep"></i>
<a class="p2" href="#">页-1</a><button class="add" aria-label="新建页"><app-icon name="plus"></app-icon></button>
<div class="right"><span class="id">形状&nbsp; ID:&nbsp; &nbsp;105</span><button aria-label="play"><app-icon name="play"></app-icon></button><button aria-label="缩小"><app-icon name="minus"></app-icon></button>
<slider-bar value="19" label="缩放"></slider-bar><button aria-label="放大"><app-icon name="plus"></app-icon></button><span class="pct">85%</span><drop-caret class="c2"></drop-caret>
<button class="f" aria-label="全屏"><app-icon name="full"></app-icon></button><button aria-label="适合宽度"><app-icon name="fit"></app-icon></button></div>`);

/* ---------- application; the whole window is shown mirrored left to right ---------- */
define('edraw-app', () => `<style>
  :host{display:grid;grid-template-rows:auto auto minmax(0,1fr) auto;grid-template-columns:minmax(0,1fr);height:100vh;transform:scaleX(-1);overflow:hidden}
  main{display:grid;grid-template-columns:minmax(0,1fr) auto auto;min-height:0}
</style><title-bar></title-bar><ribbon-bar></ribbon-bar>
<main><work-area></work-area><side-rail></side-rail><property-panel></property-panel></main><status-bar></status-bar>`);
</script>
</body>
</html>
